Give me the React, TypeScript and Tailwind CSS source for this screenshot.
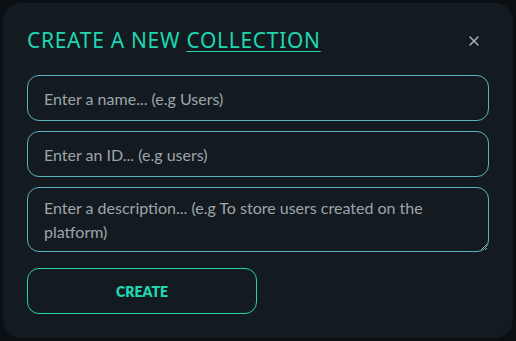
import { X } from 'lucide-react';

export default function App() {
    return (
        <div className="flex h-[341px] w-[516px] items-center justify-center bg-[#0b1015]">
            <div className="flex w-[510px] flex-col rounded-[18px] bg-[#131b21] px-6 pb-6 pt-6">
                <div className="flex h-[28px] items-center justify-between">
                    <h2 className="font-['Noto_Sans',sans-serif] text-[21px] font-normal tracking-[0.7px] text-[#1fd6b0]">
                        CREATE A NEW{' '}
                        <span className="underline decoration-1 underline-offset-[3px]">
                            COLLECTION
                        </span>
                    </h2>
                    <button className="mr-[7px] text-[#a9b8c5]">
                        <X size={16} strokeWidth={2} />
                    </button>
                </div>

                <div className="mt-5 flex flex-col gap-[10px] font-['Lato',sans-serif]">
                    <input
                        className="h-[46px] w-full rounded-xl border-[1.5px] border-[#5cb4be] bg-transparent px-4 text-[16px] text-[#d0d6da] outline-none placeholder:text-[#9da5ab]"
                        placeholder="Enter a name... (e.g Users)"
                    />
                    <input
                        className="h-[46px] w-full rounded-xl border-[1.5px] border-[#5cb4be] bg-transparent px-4 text-[16px] text-[#d0d6da] outline-none placeholder:text-[#9da5ab]"
                        placeholder="Enter an ID... (e.g users)"
                    />
                    <textarea
                        rows={2}
                        className="h-[65px] w-full rounded-xl border-[1.5px] border-[#5cb4be] bg-transparent px-4 py-[8px] text-[16px] leading-6 text-[#d0d6da] outline-none placeholder:text-[#9da5ab]"
                        placeholder="Enter a description... (e.g To store users created on the platform)"
                    />
                </div>

                <button className="mt-4 h-[46px] w-[230px] rounded-xl border-[1.5px] border-[#1fd6b0] font-['Lato',sans-serif] text-[14px] font-extrabold text-[#1fd6b0]">
                    CREATE
                </button>
            </div>
        </div>
    );
}
